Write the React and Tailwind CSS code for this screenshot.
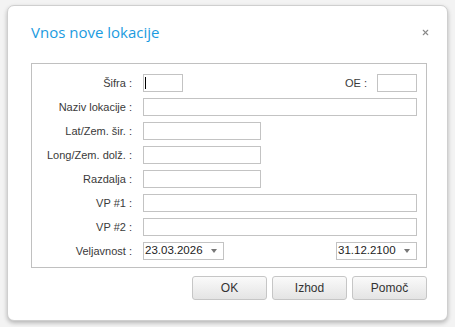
import { X } from 'lucide-react';

const rows = [
  { label: 'Naziv lokacije :', width: 'flex-1' },
  { label: 'Lat/Zem. šir. :', width: 'w-[118px]' },
  { label: 'Long/Zem. dolž. :', width: 'w-[118px]' },
  { label: 'Razdalja :', width: 'w-[118px]' },
  { label: 'VP #1 :', width: 'flex-1' },
  { label: 'VP #2 :', width: 'flex-1' },
];

function Field({ className = '', children }) {
  return (
    <div className={`h-[18px] border border-[#c3c3c3] bg-white ${className}`}>{children}</div>
  );
}

function DateSelect({ value, className = '' }) {
  return (
    <div className={`h-[18px] border border-[#c3c3c3] bg-white flex items-center justify-between pl-[1px] pr-[6px] text-[11.5px] text-[#222] ${className}`}>
      <span>{value}</span>
      <span className="w-0 h-0 border-l-[3.5px] border-r-[3.5px] border-t-[4px] border-l-transparent border-r-transparent border-t-[#777]"></span>
    </div>
  );
}

function Button({ children }) {
  return (
    <button className="w-[75px] h-[24px] rounded-[3px] border border-[#c6c6c6] bg-gradient-to-b from-[#fafafa] to-[#e4e4e4] text-[12px] text-[#333]">
      {children}
    </button>
  );
}

export default function App() {
  return (
    <div className="w-[455px] h-[327px] bg-[#f3f3f3] pl-[7px] pt-[5px] overflow-hidden" style={{ fontFamily: '"Liberation Sans", Arial, sans-serif' }}>
      <div className="w-[441px] h-[316px] bg-white rounded-[7px] border border-[#cfcfcf] shadow-[0_2px_4px_rgba(0,0,0,0.25)] pl-[23px] pr-[20px] relative">
        <div className="flex items-start justify-between pt-[16px] h-[56px]">
          <h1 className="text-[15px] leading-[20px] text-[#1b9be0]" style={{ fontFamily: '"Open Sans", sans-serif' }}>Vnos nove lokacije</h1>
          <X className="w-[9px] h-[9px] text-[#8a8a8a] mr-[-3px] mt-[6px]" strokeWidth={3} />
        </div>

        <div className="mt-[1px] border border-[#c0c0c0] h-[205px] pt-[10px] pr-[9px] flex flex-col gap-[6px] text-[11px] text-[#3a3a3a]">
          <div className="flex items-center h-[18px]">
            <span className="w-[100px] text-right">Šifra :</span>
            <Field className="ml-[11px] w-[40px] relative">
              <span className="absolute left-[1px] top-[2px] w-[1px] h-[12px] bg-black"></span>
            </Field>
            <span className="ml-auto mr-[10px]">OE :</span>
            <Field className="w-[40px]" />
          </div>
          {rows.map((r) => (
            <div key={r.label} className="flex items-center h-[18px]">
              <span className="w-[100px] text-right">{r.label}</span>
              <Field className={`ml-[11px] ${r.width}`} />
            </div>
          ))}
          <div className="flex items-center h-[18px]">
            <span className="w-[100px] text-right">Veljavnost :</span>
            <DateSelect value="23.03.2026" className="ml-[11px] w-[81px]" />
            <DateSelect value="31.12.2100" className="ml-auto w-[81px]" />
          </div>
        </div>

        <div className="flex justify-end gap-[5px] mt-[8px] pr-[0px]">
          <Button>OK</Button>
          <Button>Izhod</Button>
          <Button>Pomoč</Button>
        </div>
      </div>
    </div>
  );
}
